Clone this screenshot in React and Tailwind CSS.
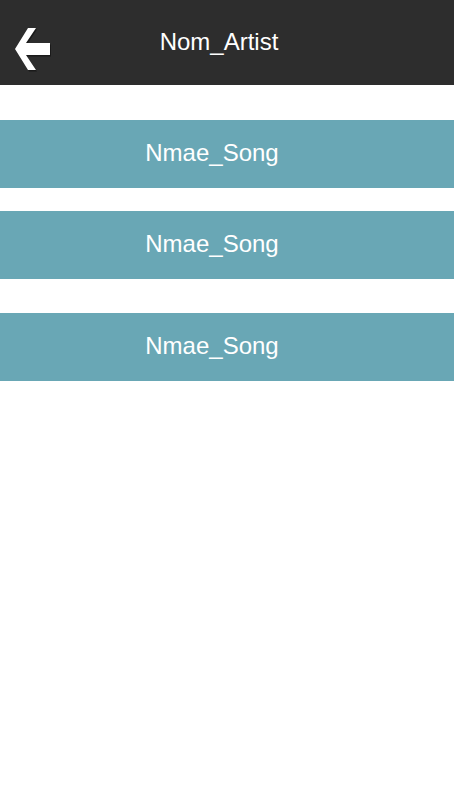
import React from 'react';

const songs = [
  { name: 'Nmae_Song', mt: 'mt-[35px]' },
  { name: 'Nmae_Song', mt: 'mt-[23px]' },
  { name: 'Nmae_Song', mt: 'mt-[34px]' },
];

const BackArrow = () => (
  <svg width="40" height="48" viewBox="0 0 40 48" className="block">
    <polygon
      points="3,23 16,2 24,2 14,17 38,17 38,29 14,29 24,44 16,44"
      fill="#1a1a1a"
      transform="translate(1,1.5)"
    />
    <polygon
      points="3,23 16,2 24,2 14,17 38,17 38,29 14,29 24,44 16,44"
      fill="#ffffff"
    />
  </svg>
);

const App = () => (
  <div className="w-[454px] min-h-[794px] bg-white" style={{ fontFamily: '"Liberation Sans", Arial, sans-serif' }}>
    <header className="relative h-[85px] bg-[#2d2d2d] flex items-center justify-center pr-[16px] pb-[2px]">
      <button className="absolute left-[12px] top-[26px]">
        <BackArrow />
      </button>
      <h1 className="text-white text-[24px] leading-none">Nom_Artist</h1>
    </header>
    {songs.map((s, i) => (
      <div key={i} className={`${s.mt} h-[68px] bg-[#69a7b5] flex items-center justify-center pr-[30px] pb-[3px]`}>
        <span className="text-white text-[24px] leading-none">{s.name}</span>
      </div>
    ))}
  </div>
);

export default App;
